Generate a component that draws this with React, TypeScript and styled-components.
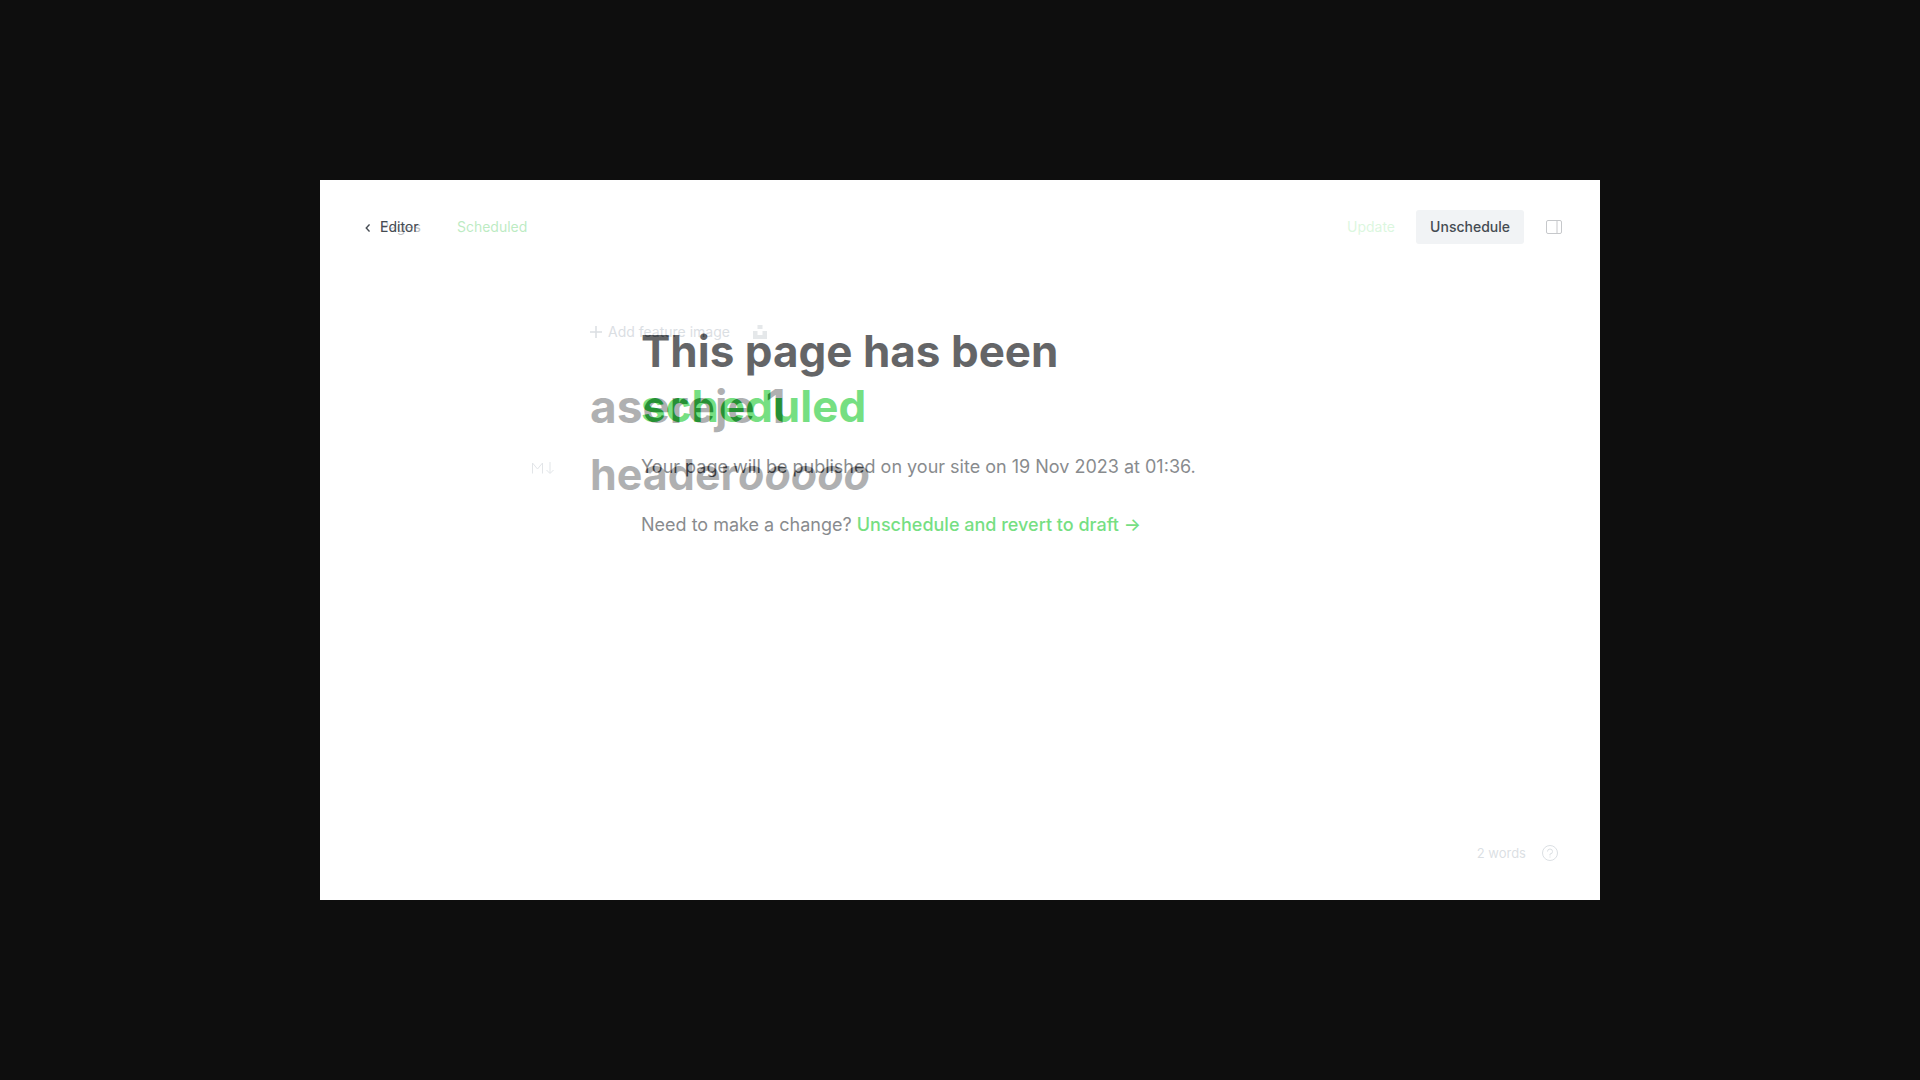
import React from "react";
import styled, { createGlobalStyle } from "styled-components";

const GlobalStyle = createGlobalStyle`
  * { box-sizing: border-box; }
  body { margin: 0; background: #0e0e0e; font-family: Inter, "Liberation Sans", sans-serif; }
  h1, h2, p { margin: 0; }
  button { font: inherit; border: 0; background: none; padding: 0; cursor: pointer; }
  a { text-decoration: none; }
`;

const Stage = styled.main`
  min-height: 100vh;
  display: grid;
  place-items: center;
`;

const Screen = styled.div`
  position: relative;
  width: 66.6667%;
  aspect-ratio: 16 / 9;
  display: grid;
  background: #fff;
  overflow: hidden;
`;

const Editor = styled.section`
  display: flex;
  flex-direction: column;
`;

const Header = styled.header`
  display: flex;
  align-items: center;
  height: 94px;
  padding: 0 38px 0 44px;
  font-size: 14px;
  line-height: 20px;
`;

const Crumb = styled.a`
  display: flex;
  align-items: center;
  gap: 8px;
  color: #454b52;
`;

const Status = styled.span`
  margin-left: 36px;
  color: #3cc44e;
`;

const Actions = styled.div`
  display: flex;
  align-items: center;
  gap: 22px;
  margin-left: auto;
`;

const HeaderButton = styled.button<{ $filled?: boolean }>`
  height: 34px;
  padding: 0 ${(p) => (p.$filled ? 14 : 0)}px;
  border-radius: 3px;
  background: ${(p) => (p.$filled ? "#f1f3f5" : "transparent")};
  color: ${(p) => (p.$filled ? "#454b52" : "#30cf43")};
  font-weight: ${(p) => (p.$filled ? 500 : 400)};
  &:disabled { opacity: 0.5; }
`;

/* Keeps the header actions clear of the button that floats above the editor. */
const ActionGap = styled.span`
  width: 107px;
`;

const IconButton = styled.button<{ $faint?: boolean }>`
  display: flex;
  color: ${(p) => (p.$faint ? "#b4bcc4" : "#5a5f66")};
`;

const Canvas = styled.div`
  flex: 1;
  padding: 48px 270px 0;
`;

const FeatureRow = styled.div`
  display: flex;
  align-items: center;
  gap: 23px;
  height: 20px;
  font-size: 14px;
  line-height: 18px;
  color: #95a1ad;
`;

const AddImage = styled.button`
  display: flex;
  align-items: center;
  gap: 6px;
  color: inherit;
`;

const DocTitle = styled.h1`
  margin-top: 36px;
  color: #15171a;
  font-size: 46px;
  line-height: 56px;
  font-weight: 700;
`;

const BlockRow = styled.div`
  display: flex;
  align-items: flex-start;
  gap: 36px;
  margin: 12px 0 0 -58px;
  color: #abb4be;
`;

const MarkdownIcon = styled.svg`
  margin-top: 16px;
`;

const DocHeading = styled.h2`
  color: #15171a;
  font-size: 43px;
  line-height: 56px;
  font-weight: 700;
`;

const Footer = styled.footer`
  display: flex;
  justify-content: flex-end;
  align-items: center;
  gap: 16px;
  height: 94px;
  padding: 0 42px 0 0;
  color: #95a1ad;
  font-size: 13px;
`;

const Overlay = styled.section`
  position: absolute;
  inset: 0;
  padding-top: 144px;
  background: #fff;
  opacity: 0.66;
`;

const Controls = styled.div`
  position: absolute;
  inset: 0 0 auto;
`;

const FloatingAction = styled.div`
  margin: 0 38px 0 auto;
`;

const Message = styled.div`
  padding: 0 321px;
  color: #4c5054;
  font-size: 18px;
  line-height: 28px;
  font-weight: 400;
`;

const MessageTitle = styled.h1`
  margin-bottom: 19px;
  color: #15171a;
  font-size: 44px;
  line-height: 55px;
  font-weight: 700;
`;

const Green = styled.span`
  display: block;
  color: #30cf43;
`;

const Paragraph = styled.p`
  & + & { margin-top: 30px; }
`;

const RevertLink = styled.a`
  color: #30cf43;
  font-weight: 500;
`;

const Chevron = () => (
  <svg width="8" height="12" viewBox="0 0 8 12" fill="none" stroke="currentColor" strokeWidth="1.2">
    <path d="M5.500 3.500 2.200 7l3.300 3.500" />
  </svg>
);

export default function App() {
  return (
    <Stage>
      <GlobalStyle />
      <Screen>
        <Editor>
          <Header>
            <Crumb href="#pages"><Chevron />Pages</Crumb>
            <Status>Scheduled</Status>
            <Actions>
              <HeaderButton disabled>Update</HeaderButton>
              <ActionGap />
              <IconButton aria-label="Settings">
                <svg width="16" height="14" viewBox="0 0 16 14" fill="none" stroke="currentColor">
                  <rect x="0.5" y="0.5" width="15" height="13" rx="1.5" />
                  <path d="M11 .5v13" />
                </svg>
              </IconButton>
            </Actions>
          </Header>
          <Canvas>
            <FeatureRow>
              <AddImage>
                <svg width="12" height="12" viewBox="0 0 12 12" stroke="currentColor" strokeWidth="1.5">
                  <path d="M6 0v12M0 6h12" />
                </svg>
                Add feature image
              </AddImage>
              <IconButton $faint aria-label="Unsplash">
                <svg width="14" height="14" viewBox="0 0 14 14" fill="currentColor">
                  <path d="M4.500 0h5v4h-5zM0 6h4.500v4h5V6H14v8H0z" />
                </svg>
              </IconButton>
            </FeatureRow>
            <DocTitle>asereje 1</DocTitle>
            <BlockRow>
              <MarkdownIcon width="22" height="12" viewBox="0 0 22 12" fill="none" stroke="currentColor">
                <path d="M.5 11.500V1l5 6 5-6v10.500M18 0v11M14.500 8l3.500 3.500L21.500 8" />
              </MarkdownIcon>
              <DocHeading>header<em>ooooo</em></DocHeading>
            </BlockRow>
          </Canvas>
          <Footer>
            2 words
            <svg width="16" height="16" viewBox="0 0 16 16" fill="none" stroke="currentColor">
              <circle cx="8" cy="8" r="7.5" />
              <path d="M5.500 6.500a2.500 2.500 0 1 1 2.500 2.500v1.500M8 11.500v1" />
            </svg>
          </Footer>
        </Editor>
        <Overlay>
          <Message>
            <MessageTitle>This page has been <Green>scheduled</Green></MessageTitle>
            <Paragraph>Your page will be published on your site on 19 Nov 2023 at 01:36.</Paragraph>
            <Paragraph>Need to make a change? <RevertLink href="#revert">Unschedule and revert to draft →</RevertLink></Paragraph>
          </Message>
        </Overlay>
        <Controls>
          <Header>
            <Crumb href="#editor"><Chevron />Editor</Crumb>
            <FloatingAction>
              <HeaderButton $filled>Unschedule</HeaderButton>
            </FloatingAction>
          </Header>
        </Controls>
      </Screen>
    </Stage>
  );
}
